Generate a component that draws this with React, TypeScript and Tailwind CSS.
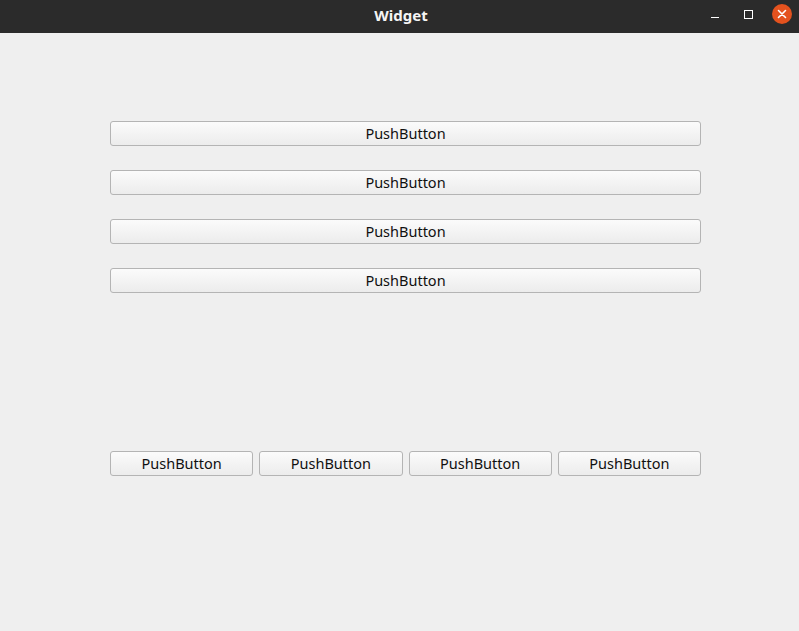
import React from "react";

const Btn = ({ className = "" }: { className?: string }) => (
  <button
    className={`h-[25px] rounded-[3px] border border-[#b4b4b4] bg-gradient-to-b from-[#fbfbfb] to-[#ececec] text-[14.5px] leading-none text-[#101010] ${className}`}
    style={{ fontFamily: "'Noto Sans', 'Open Sans', sans-serif" }}
  >
    PushButton
  </button>
);

export default function App() {
  return (
    <div className="w-[799px] h-[631px] flex flex-col bg-[#efefef] overflow-hidden">
      <div className="relative h-[33px] shrink-0 bg-[#2b2b2b] flex items-center justify-center">
        <span
          className="text-[15px] font-bold text-[#f5f5f5] -mt-[2px] ml-[3px]"
          style={{ fontFamily: "'Noto Sans', 'Open Sans', sans-serif" }}
        >
          Widget
        </span>
        <div className="absolute right-0 top-0 h-[30px] flex items-center">
          <div className="w-[8px] h-[1px] bg-white mt-[4px] ml-[2px]" />
          <div className="w-[9px] h-[9px] border border-white ml-[25px] -mt-[2px]" />
          <div className="w-[20px] h-[20px] rounded-full bg-[#e4521e] ml-[19px] mr-[7px] flex items-center justify-center -mt-[2px]">
            <svg width="10" height="10" viewBox="0 0 10 10">
              <path d="M1.5 1.5 L8.5 8.5 M8.5 1.5 L1.5 8.5" stroke="white" strokeWidth="1.6" strokeLinecap="round" />
            </svg>
          </div>
        </div>
      </div>
      <div className="pl-[110px] pr-[98px] pt-[88px] flex flex-col">
        <div className="flex flex-col gap-[24px]">
          <Btn className="w-full" />
          <Btn className="w-full" />
          <Btn className="w-full" />
          <Btn className="w-full" />
        </div>
        <div className="mt-[158px] grid grid-cols-4 gap-[6px]">
          <Btn />
          <Btn />
          <Btn />
          <Btn />
        </div>
      </div>
    </div>
  );
}
